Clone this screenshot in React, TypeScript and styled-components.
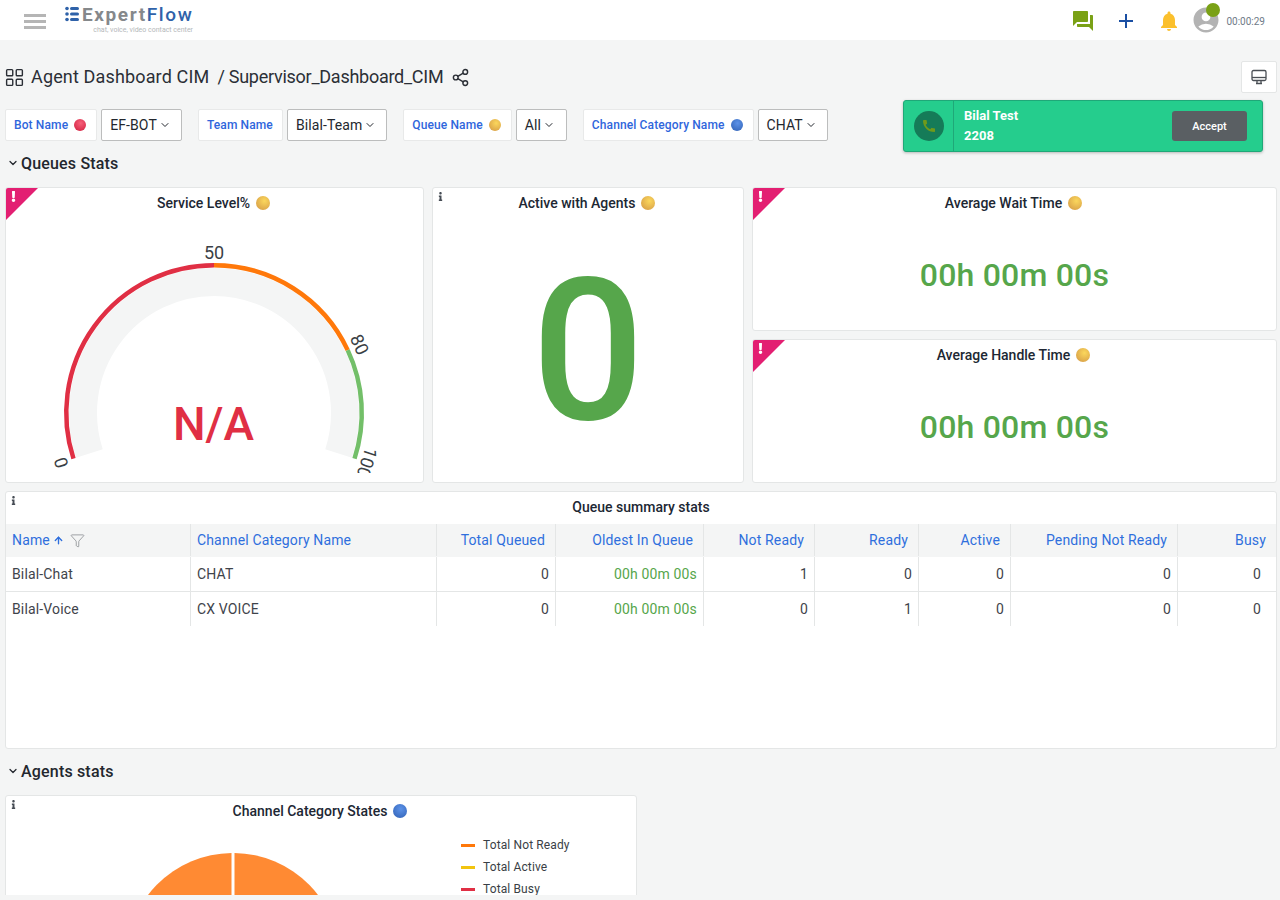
import React from 'react';
import styled, { createGlobalStyle } from 'styled-components';
import { ArrowUp, ChevronDown, Filter, LayoutGrid, Share2 } from 'lucide-react';
import { FaExclamation, FaInfo } from 'react-icons/fa';
import { MdAccountCircle, MdAdd, MdCall, MdForum, MdNotifications } from 'react-icons/md';

type Tone = 'red' | 'gold' | 'blue';

const GlobalStyle = createGlobalStyle`
  html, body {
    margin: 0;
    height: 100%;
    overflow: hidden;
    background: #f4f5f5;
    font-family: Roboto, "Liberation Sans", sans-serif;
  }
`;

const Page = styled.div`
  height: 895px;
  overflow: hidden;
  background: #f4f5f5;
`;

const TopBar = styled.header`
  height: 40px;
  background: #fff;
  display: flex;
  align-items: center;
  padding: 0 15px 0 24px;
`;

const Burger = styled.div`
  width: 22px;
  display: flex;
  flex-direction: column;
  gap: 3px;
  margin-top: 2px;

  span {
    height: 3px;
    background: #b5b5b5;
  }
`;

const Logo = styled.div`
  margin-left: 19px;
  width: 128px;
  height: 40px;
  display: flex;
  flex-direction: column;
  align-items: flex-end;
  position: relative;
  top: -1px;
`;

const LogoRow = styled.div`
  display: flex;
  align-items: center;
  gap: 2px;
  height: 24px;
  align-self: flex-start;
  margin-top: 3px;
`;

const LogoWord = styled.span<{ $blue?: boolean }>`
  font-size: 19px;
  letter-spacing: 1.6px;
  color: ${props => (props.$blue ? '#2f62a9' : '#85888b')};
  font-weight: ${props => (props.$blue ? 500 : 700)};
`;

const LogoTag = styled.span`
  font-size: 7px;
  color: #b4b7ba;
`;

const TopRight = styled.div`
  margin-left: auto;
  display: flex;
  align-items: center;
`;

const TopIcon = styled.span<{ $color: string; $gap: number }>`
  display: flex;
  color: ${props => props.$color};
  margin-right: ${props => props.$gap}px;
  margin-top: 2px;
`;

const Avatar = styled.span`
  position: relative;
  display: flex;
  color: #b3b3b3;
  margin-right: 5px;

  &::after {
    content: '';
    position: absolute;
    top: -2px;
    right: 1px;
    width: 14px;
    height: 14px;
    border-radius: 50%;
    background: #7aa116;
  }
`;

const Timer = styled.span`
  font-size: 10px;
  color: #6f7b88;
  margin-top: 2px;
`;

const TitleRow = styled.div`
  margin-top: 21px;
  height: 32px;
  padding: 0 3px 0 4px;
  display: flex;
  align-items: center;
  color: #2b2f36;
`;

const Crumb = styled.span<{ $gap: number; $spacing: number }>`
  font-size: 18px;
  margin-left: ${props => props.$gap}px;
  letter-spacing: ${props => props.$spacing}px;
  margin-top: -1px;
`;

const ShareIcon = styled(Share2)`
  margin-left: 8px;
`;

const ViewButton = styled.button`
  margin-left: auto;
  width: 36px;
  height: 32px;
  padding: 0;
  background: #fff;
  border: 1px solid #e4e6e6;
  border-radius: 2px;
  display: flex;
  align-items: center;
  justify-content: center;
`;

const FilterRow = styled.div`
  position: relative;
  margin-top: 16px;
  padding-left: 5px;
  display: flex;
  gap: 16px;
`;

const FilterGroup = styled.div`
  display: flex;
  gap: 4px;
`;

const FilterLabel = styled.label`
  min-width: 85px;
  height: 32px;
  box-sizing: border-box;
  padding: 0 8px;
  display: flex;
  align-items: center;
  gap: 6px;
  background: #fff;
  border: 1px solid #e8e9e9;
  border-radius: 2px;
  font-size: 12px;
  font-weight: 500;
  letter-spacing: 0.12px;
  color: #2f66dc;
`;

const FilterSelect = styled.div`
  min-width: 51px;
  height: 32px;
  box-sizing: border-box;
  padding: 0 10px 0 8px;
  display: flex;
  align-items: center;
  gap: 2px;
  background: #fff;
  border: 1px solid #bcbdbd;
  border-radius: 2px;
  font-size: 14px;
  letter-spacing: 0.1px;
  color: #23272e;
`;

const Ball = styled.span<{ $tone: Tone; $small?: boolean }>`
  display: inline-block;
  flex: none;
  width: ${props => (props.$small ? 12 : 14)}px;
  height: ${props => (props.$small ? 12 : 14)}px;
  margin-right: 2px;
  border-radius: 50%;
  background: ${props =>
    props.$tone === 'red'
      ? 'radial-gradient(circle at 55% 35%, #f7607a, #d92c4a 75%)'
      : props.$tone === 'gold'
        ? 'radial-gradient(circle at 60% 35%, #fbd75c, #dca64a 75%)'
        : 'radial-gradient(circle at 55% 35%, #5c92e8, #3a6cc0 75%)'};
`;

const CallCard = styled.div`
  position: absolute;
  top: -9px;
  right: 17px;
  width: 360px;
  height: 52px;
  box-sizing: border-box;
  display: flex;
  align-items: center;
  background: #25cd8d;
  border: 1px solid #1fa878;
  border-radius: 3px;
  box-shadow: 0 1px 3px rgba(0, 0, 0, 0.25);
  color: #fff;
`;

const CallIconBox = styled.div`
  width: 49px;
  height: 100%;
  flex: none;
  display: flex;
  align-items: center;
  justify-content: center;
  border-right: 1px solid #1fa878;
`;

const CallIcon = styled.div`
  width: 30px;
  height: 30px;
  border-radius: 50%;
  background: #157b58;
  color: #6f9a1b;
  display: flex;
  align-items: center;
  justify-content: center;
`;

const Caller = styled.div`
  margin-left: 10px;
  font-size: 13px;
  font-weight: 700;
  line-height: 20px;
`;

const AcceptButton = styled.button`
  margin-left: auto;
  margin-right: 15px;
  width: 75px;
  height: 30px;
  border: none;
  border-radius: 3px;
  background: #5a5f63;
  color: #fff;
  font-family: inherit;
  font-size: 11px;
  font-weight: 500;
`;

const SectionHead = styled.h2`
  margin: 10px 0 12px;
  height: 24px;
  padding-left: 7px;
  display: flex;
  align-items: center;
  gap: 2px;
  font-size: 16px;
  font-weight: 500;
  letter-spacing: 0.18px;
  color: #23272e;
`;

const PanelGrid = styled.div`
  margin: 0 3px 8px 5px;
  display: grid;
  grid-template-columns: 419px 312px 1fr;
  gap: 8px;
`;

const Stack = styled.div`
  display: flex;
  flex-direction: column;
  gap: 8px;
`;

const Panel = styled.section<{ $height: number; $width?: number }>`
  position: relative;
  box-sizing: border-box;
  height: ${props => props.$height}px;
  width: ${props => (props.$width ? `${props.$width}px` : 'auto')};
  background: #fff;
  border: 1px solid #e4e6e6;
  border-radius: 3px;
  overflow: hidden;
`;

const PanelTitle = styled.h3`
  margin: 0;
  height: 30px;
  display: flex;
  align-items: center;
  justify-content: center;
  gap: 6px;
  font-size: 14px;
  font-weight: 500;
  color: #202733;
`;

const AlertCorner = styled.span`
  position: absolute;
  top: 0;
  left: 0;
  width: 32px;
  height: 32px;
  background: #e31f72;
  clip-path: polygon(0 0, 100% 0, 0 100%);
  color: #fff;

  svg {
    position: absolute;
    top: 3px;
    left: 2px;
  }
`;

const InfoMark = styled.span`
  position: absolute;
  top: 4px;
  left: 3px;
  display: flex;
  color: #464c54;
`;

const GaugeSvg = styled.svg`
  display: block;
`;

const BigStat = styled.div`
  height: 264px;
  box-sizing: border-box;
  padding-top: 1px;
  display: flex;
  align-items: center;
  justify-content: center;
  font-size: 198px;
  font-weight: 500;
  line-height: 1;
  color: #56a64b;
`;

const TimeStat = styled.div`
  height: 114px;
  display: flex;
  align-items: center;
  justify-content: center;
  font-size: 32px;
  font-weight: 500;
  letter-spacing: 0.2px;
  color: #56a64b;
`;

const TableWrap = styled.div`
  margin: 0 3px 0 5px;
`;

const TableBody = styled.div`
  margin-top: 2px;
`;

const TableRow = styled.div<{ $head?: boolean }>`
  display: grid;
  grid-template-columns: 185px 246px 119px 148px 111px 104px 92px 167px 1fr;
  height: ${props => (props.$head ? 33 : 35)}px;
  background: ${props => (props.$head ? '#f4f5f5' : '#fff')};
  border-bottom: 1px solid ${props => (props.$head ? 'transparent' : '#e4e6e6')};
  box-sizing: border-box;

  &:last-child {
    border-bottom-color: transparent;
  }
`;

const Cell = styled.div<{ $head?: boolean; $right?: boolean; $green?: boolean; $pad?: number }>`
  display: flex;
  align-items: center;
  justify-content: ${props => (props.$right ? 'flex-end' : 'flex-start')};
  gap: 3px;
  padding: 0 ${props => props.$pad ?? 6}px;
  border-right: 1px solid #e4e6e6;
  font-size: 14px;
  letter-spacing: 0.15px;
  color: ${props => (props.$head ? '#2f6fdd' : props.$green ? '#56a64b' : '#3f444b')};

  &:last-child {
    border-right: none;
  }
`;

const FilterIcon = styled(Filter)`
  margin-left: 3px;
  color: #8b8f93;
`;

const Legend = styled.ul`
  position: absolute;
  top: 41px;
  left: 455px;
  margin: 0;
  padding: 0;
  list-style: none;
  display: flex;
  flex-direction: column;
  gap: 6px;
`;

const LegendItem = styled.li<{ $color: string }>`
  height: 16px;
  display: flex;
  align-items: center;
  gap: 8px;
  font-size: 12px;
  letter-spacing: 0.12px;
  color: #3a3f46;

  &::before {
    content: '';
    width: 14px;
    height: 3px;
    background: ${props => props.$color};
  }
`;

const PieSvg = styled.svg`
  display: block;
  margin-left: 120px;
`;

const filters: { label: string; tone?: Tone; value: string }[] = [
  { label: 'Bot Name', tone: 'red', value: 'EF-BOT' },
  { label: 'Team Name', value: 'Bilal-Team' },
  { label: 'Queue Name', tone: 'gold', value: 'All' },
  { label: 'Channel Category Name', tone: 'blue', value: 'CHAT' },
];

const columns = [
  'Name',
  'Channel Category Name',
  'Total Queued',
  'Oldest In Queue',
  'Not Ready',
  'Ready',
  'Active',
  'Pending Not Ready',
  'Busy',
];

const rows = [
  ['Bilal-Chat', 'CHAT', '0', '00h 00m 00s', '1', '0', '0', '0', '0'],
  ['Bilal-Voice', 'CX VOICE', '0', '00h 00m 00s', '0', '1', '0', '0', '0'],
];

const CX = 208;
const CY = 195;

// t is the 0..1 position on the gauge, which sweeps 216 degrees
const gaugePoint = (t: number, r: number) => {
  const a = ((-108 + 216 * t) * Math.PI) / 180;
  return { x: CX + r * Math.sin(a), y: CY - r * Math.cos(a) };
};

const gaugeArc = (from: number, to: number, r: number) => {
  const s = gaugePoint(from, r);
  const e = gaugePoint(to, r);
  const large = (to - from) * 216 > 180 ? 1 : 0;
  return `M${s.x} ${s.y}A${r} ${r} 0 ${large} 1 ${e.x} ${e.y}`;
};

const ticks = [
  { label: '0', t: 0 },
  { label: '50', t: 0.5 },
  { label: '80', t: 0.8 },
  { label: '100', t: 1 },
];

const Gauge: React.FC = () => (
  <GaugeSvg width="417" height="255" viewBox="0 0 417 255">
    <path d={gaugeArc(0, 1, 131)} fill="none" stroke="#f4f5f5" strokeWidth="28" />
    <path d={gaugeArc(0, 0.5, 147.75)} fill="none" stroke="#e02f44" strokeWidth="4.5" />
    <path d={gaugeArc(0.5, 0.8, 147.75)} fill="none" stroke="#ff780a" strokeWidth="4.5" />
    <path d={gaugeArc(0.8, 1, 147.75)} fill="none" stroke="#73bf69" strokeWidth="4.5" />
    {ticks.map(tick => {
      const p = gaugePoint(tick.t, 161);
      return (
        <text
          key={tick.label}
          x={p.x}
          y={p.y}
          fontSize="18"
          fill="#3a3f45"
          textAnchor="middle"
          dominantBaseline="central"
          transform={`rotate(${-108 + 216 * tick.t} ${p.x} ${p.y})`}
        >
          {tick.label}
        </text>
      );
    })}
    <text x={CX - 0.5} y="222" fontSize="46" fontWeight="500" fill="#e02f44" textAnchor="middle">
      N/A
    </text>
  </GaugeSvg>
);

const Alert: React.FC = () => (
  <AlertCorner>
    <FaExclamation size={11} />
  </AlertCorner>
);

const Info: React.FC = () => (
  <InfoMark>
    <FaInfo size={9} />
  </InfoMark>
);

const App: React.FC = () => {
  return (
    <Page>
      <GlobalStyle />
      <TopBar>
        <Burger>
          <span />
          <span />
          <span />
        </Burger>
        <Logo>
          <LogoRow>
            <svg width="15" height="16" viewBox="0 0 15 16" fill="#2f62a9">
              <circle cx="2" cy="2.5" r="1.8" />
              <circle cx="2" cy="8" r="1.8" />
              <circle cx="2" cy="13.5" r="1.8" />
              <rect x="5" y="1" width="9" height="3" rx="1.5" />
              <rect x="5" y="6.5" width="9" height="3" rx="1.5" />
              <rect x="5" y="12" width="9" height="3" rx="1.5" />
            </svg>
            <span>
              <LogoWord>Expert</LogoWord>
              <LogoWord $blue>Flow</LogoWord>
            </span>
          </LogoRow>
          <LogoTag>chat, voice, video contact center</LogoTag>
        </Logo>
        <TopRight>
          <TopIcon $color="#7aa116" $gap={19}>
            <MdForum size={24} />
          </TopIcon>
          <TopIcon $color="#1a4fa3" $gap={19}>
            <MdAdd size={24} />
          </TopIcon>
          <TopIcon $color="#fbc02d" $gap={10}>
            <MdNotifications size={24} />
          </TopIcon>
          <Avatar>
            <MdAccountCircle size={30} />
          </Avatar>
          <Timer>00:00:29</Timer>
        </TopRight>
      </TopBar>

      <TitleRow>
        <LayoutGrid size={21} strokeWidth={1.6} />
        <Crumb $gap={6} $spacing={0.15}>
          Agent Dashboard CIM
        </Crumb>
        <Crumb $gap={8} $spacing={-0.26}>
          / Supervisor_Dashboard_CIM
        </Crumb>
        <ShareIcon size={19} strokeWidth={1.8} />
        <ViewButton aria-label="view">
          <svg width="16" height="16" viewBox="0 0 16 16" fill="none" stroke="#4a4f55" strokeWidth="1.3">
            <rect x="1" y="1.5" width="14" height="10" rx="1.5" />
            <path d="M1 8.5h14" />
            <path d="M5 14.5h6M6 11.5v3M10 11.5v3" />
          </svg>
        </ViewButton>
      </TitleRow>

      <FilterRow>
        {filters.map(filter => (
          <FilterGroup key={filter.label}>
            <FilterLabel>
              {filter.label}
              {filter.tone && <Ball $tone={filter.tone} $small />}
            </FilterLabel>
            <FilterSelect>
              {filter.value}
              <ChevronDown size={12} strokeWidth={2} />
            </FilterSelect>
          </FilterGroup>
        ))}
        <CallCard>
          <CallIconBox>
            <CallIcon>
              <MdCall size={16} />
            </CallIcon>
          </CallIconBox>
          <Caller>
            <div>Bilal Test</div>
            <div>2208</div>
          </Caller>
          <AcceptButton>Accept</AcceptButton>
        </CallCard>
      </FilterRow>

      <SectionHead>
        <ChevronDown size={12} strokeWidth={2.5} />
        Queues Stats
      </SectionHead>

      <PanelGrid>
        <Panel $height={296}>
          <Alert />
          <PanelTitle>
            Service Level%
            <Ball $tone="gold" />
          </PanelTitle>
          <Gauge />
        </Panel>
        <Panel $height={296}>
          <Info />
          <PanelTitle>
            Active with Agents
            <Ball $tone="gold" />
          </PanelTitle>
          <BigStat>0</BigStat>
        </Panel>
        <Stack>
          <Panel $height={144}>
            <Alert />
            <PanelTitle>
              Average Wait Time
              <Ball $tone="gold" />
            </PanelTitle>
            <TimeStat>00h 00m 00s</TimeStat>
          </Panel>
          <Panel $height={144}>
            <Alert />
            <PanelTitle>
              Average Handle Time
              <Ball $tone="gold" />
            </PanelTitle>
            <TimeStat>00h 00m 00s</TimeStat>
          </Panel>
        </Stack>
      </PanelGrid>

      <TableWrap>
        <Panel $height={258}>
          <Info />
          <PanelTitle>Queue summary stats</PanelTitle>
          <TableBody>
            <TableRow $head>
              {columns.map((column, index) => (
                <Cell key={column} $head $right={index > 1} $pad={index > 1 ? 10 : 6}>
                  {column}
                  {index === 0 && (
                    <>
                      <ArrowUp size={11} strokeWidth={3} />
                      <FilterIcon size={15} strokeWidth={1.3} />
                    </>
                  )}
                </Cell>
              ))}
            </TableRow>
            {rows.map(row => (
              <TableRow key={row[0]}>
                {row.map((value, index) => (
                  <Cell
                    key={index}
                    $right={index > 1}
                    $green={index === 3}
                    $pad={index === 8 ? 15 : 6}
                  >
                    {value}
                  </Cell>
                ))}
              </TableRow>
            ))}
          </TableBody>
        </Panel>
      </TableWrap>

      <SectionHead>
        <ChevronDown size={12} strokeWidth={2.5} />
        Agents stats
      </SectionHead>

      <PanelGrid>
        <Panel $height={260} $width={632}>
          <Info />
          <PanelTitle>
            Channel Category States
            <Ball $tone="blue" />
          </PanelTitle>
          <PieSvg width="214" height="214" viewBox="0 0 214 214">
            <path d="M105.5 27A107 107 0 0 0 0 134H105.5Z" fill="#ff8a33" />
            <path d="M108.5 27A107 107 0 0 1 214 134H108.5Z" fill="#ff8a33" />
          </PieSvg>
          <Legend>
            <LegendItem $color="#ff780a">Total Not Ready</LegendItem>
            <LegendItem $color="#f2c40f">Total Active</LegendItem>
            <LegendItem $color="#e02f44">Total Busy</LegendItem>
          </Legend>
        </Panel>
      </PanelGrid>
    </Page>
  );
};

export default App;
